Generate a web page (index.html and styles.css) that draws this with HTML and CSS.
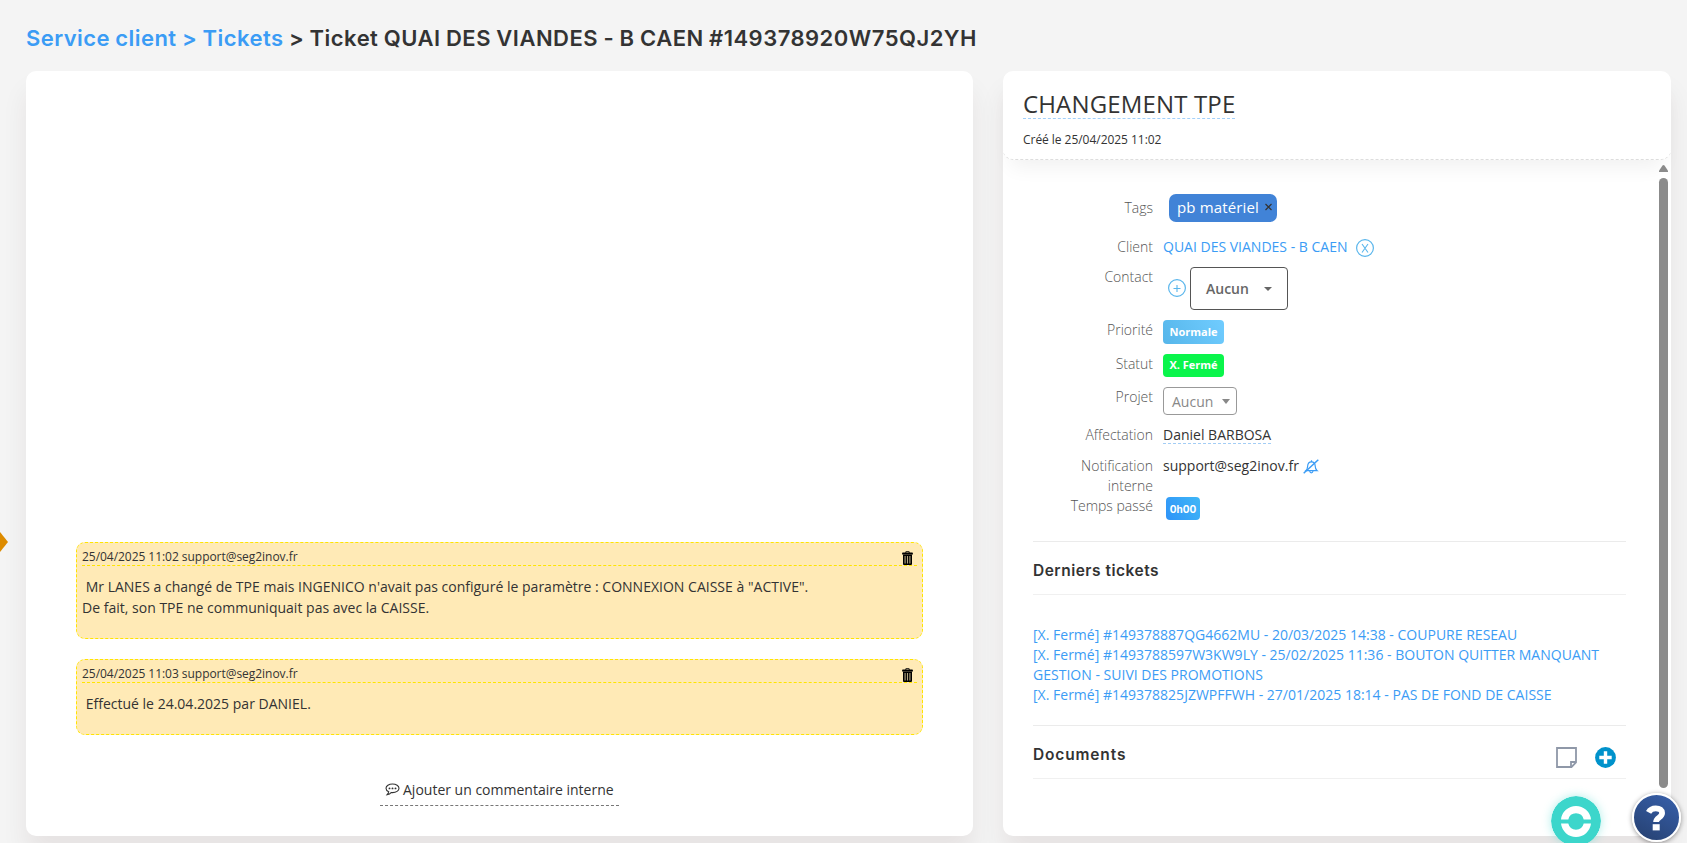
FILE: index.html
```html
<!DOCTYPE html>
<html lang="fr">
<head>
<meta charset="utf-8">
<title>Ticket</title>
<link rel="stylesheet" href="styles.css">
</head>
<body>
<svg width="0" height="0" class="defs">
  <symbol id="trash" viewBox="0 0 11 14">
    <path d="M3.4 1.6V.9c0-.4.3-.7.7-.7h2.8c.4 0 .7.3.7.7v.7h2.6c.4 0 .7.3.7.7v1.2H.1V2.3c0-.4.3-.7.7-.7zM4.3 1v.6h2.4V1z" fill="#000"/>
    <path d="M1 3.5h9V13c0 .5-.4.9-.9.9H1.9c-.5 0-.9-.4-.9-.9z" fill="#000"/>
    <path d="M3.1 5v7.6M5.5 5v7.6M7.9 5v7.6" stroke="#b3a57f" stroke-width="1.1"/>
  </symbol>
</svg>
<h1 class="crumbs"><a>Service client &gt; Tickets</a> &gt; Ticket QUAI DES VIANDES - B CAEN #149378920W75QJ2YH</h1>
<main class="columns">
  <section class="card thread">
    <article class="note">
      <header class="note-head"><span>25/04/2025 11:02 support@seg2inov.fr</span><svg class="trash"><use href="#trash"/></svg></header>
      <p class="note-body">&nbsp;Mr LANES a changé de TPE mais INGENICO n'avait pas configuré le paramètre : CONNEXION CAISSE à "ACTIVE".<br>De fait, son TPE ne communiquait pas avec la CAISSE.</p>
    </article>
    <article class="note">
      <header class="note-head"><span>25/04/2025 11:03 support@seg2inov.fr</span><svg class="trash"><use href="#trash"/></svg></header>
      <p class="note-body">&nbsp;Effectué le 24.04.2025 par DANIEL.</p>
    </article>
    <a class="add-comment">
      <svg width="15" height="13" viewBox="0 0 15 13"><path d="M7.5 1C3.9 1 1 2.9 1 5.3c0 1.5 1.1 2.8 2.7 3.5-.2 1.200-.8 2-1.600 2.900C4 11.500 5.400 10.700 6.200 9.500c.4.100.9.100 1.300.100 3.600 0 6.500-1.900 6.500-4.300S11.100 1 7.500 1z" fill="none" stroke="#333" stroke-width="1.100"/><circle cx="4.500" cy="5.400" r=".95" fill="#333"/><circle cx="7.500" cy="5.400" r=".95" fill="#333"/><circle cx="10.500" cy="5.400" r=".95" fill="#333"/></svg>
      <span>Ajouter un commentaire interne</span>
    </a>
  </section>

  <section class="card detail">
    <header class="detail-head">
      <div><span class="subject">CHANGEMENT TPE</span></div>
      <div class="created">Créé le 25/04/2025 11:02</div>
    </header>
    <div class="detail-scroll">
      <div class="detail-body">
        <dl class="fields">
          <dt class="tags-label">Tags</dt><dd><span class="tag">pb matériel<svg width="7" height="8" viewBox="0 0 7 8"><path d="M.5 1l6 6M6.500 1l-6 6" stroke="#333" stroke-width="1.200"/></svg></span></dd>
          <dt>Client</dt><dd class="client"><a>QUAI DES VIANDES - B CAEN</a><svg width="18" height="18" viewBox="0 0 18 18" fill="none" stroke="#5ab6ec"><circle cx="9" cy="9" r="8.400" stroke-width="1.200"/><path d="M6 5l6 8.500M12 5l-6 8.500" stroke-width="1.100"/></svg></dd>
          <dt>Contact</dt><dd class="contact"><svg width="18" height="18" viewBox="0 0 18 18" fill="none" stroke="#5ab6ec"><circle cx="9" cy="9" r="8.400" stroke-width="1.200"/><path d="M5.500 9.500h7M9 6v7" stroke-width="1.100"/></svg><span class="select big">Aucun<i class="caret"></i></span></dd>
          <dt>Priorité</dt><dd><span class="badge normal">Normale</span></dd>
          <dt>Statut</dt><dd><span class="badge closed">X. Fermé</span></dd>
          <dt>Projet</dt><dd><span class="select small">Aucun<i class="caret"></i></span></dd>
          <dt>Affectation</dt><dd><span class="assignee">Daniel BARBOSA</span></dd>
          <dt>Notification interne</dt><dd class="notify"><span>support@seg2inov.fr</span><svg width="16" height="15" viewBox="0 0 16 15" fill="none" stroke="#3b9cf5" stroke-width="1.200"><path d="M2.800 11.700c1.200-1 1.700-2.300 1.800-4.200.1-2.700 1.500-4.600 3.900-4.600 2.300 0 3.600 1.700 3.700 4.200 0 2 .5 3.500 1.900 4.600z"/><path d="M8.500 2.900V1.300M6.700 12c.2 1.300.8 1.800 1.600 1.800s1.500-.5 1.700-1.800"/><path d="M.7 14.200L15.300.8" stroke-width="1.500"/></svg></dd>
          <dt>Temps passé</dt><dd><span class="badge time">0h00</span></dd>
        </dl>
        <h2 class="block-title"><span class="t1">Derniers tickets</span></h2>
        <div class="links">
          <a>[X. Fermé] #149378887QG4662MU - 20/03/2025 14:38 - COUPURE RESEAU</a>
          <a>[X. Fermé] #1493788597W3KW9LY - 25/02/2025 11:36 - BOUTON QUITTER MANQUANT GESTION - SUIVI DES PROMOTIONS</a>
          <a>[X. Fermé] #149378825JZWPFFWH - 27/01/2025 18:14 - PAS DE FOND DE CAISSE</a>
        </div>
        <h2 class="block-title"><span class="t2">Documents</span>
          <span class="doc-tools">
            <svg width="21" height="21" viewBox="0 0 21 21" fill="none" stroke="#8f98a8" stroke-width="1.800"><path d="M1 1h19v14.500L15.500 20H1z"/><path d="M15 20v-5h5"/></svg>
            <svg width="21" height="21" viewBox="0 0 21 21"><circle cx="10.500" cy="10.500" r="10.400" fill="#0092cb"/><path d="M10.500 4.300v12.400M4.300 10.500h12.400" stroke="#fff" stroke-width="3.400"/></svg>
          </span>
        </h2>
      </div>
      <div class="scrollbar"><svg width="9" height="7" viewBox="0 0 9 7"><path d="M3.500.6Q4.500-.4 5.500.6L9 5.800V7H0V5.800z" fill="#8b8b8b"/></svg><div class="thumb"></div></div>
    </div>
  </section>
</main>
<div class="side-tab"></div>
<svg class="chat" width="50" height="50" viewBox="0 0 50 50"><circle cx="25" cy="25" r="25" fill="#3cd6cb"/><path d="M10 23.400a15.100 15.100 0 0 1 30 0h-7.300a7.900 7.900 0 0 0-15.400 0zM10 27.600a15.100 15.100 0 0 0 30 0h-7.300a7.900 7.900 0 0 1-15.400 0z" fill="#fff"/></svg>
<div class="help"><svg width="20" height="26" viewBox="0 0 20 26"><path d="M2.600 7.300C4 4.700 6.300 3.300 9.800 3.300c4 0 6.300 1.800 6.300 4.800 0 4.500-6 4.300-6 9" fill="none" stroke="#fff" stroke-width="5.800"/><path d="M6.700 19.200h7v6.200h-7z" fill="#fff"/></svg></div>
</body>
</html>
```
FILE: styles.css
```css
* { box-sizing: border-box; }
body {
  margin: 0;
  height: 843px;
  overflow: hidden;
  position: relative;
  background: #f4f4f4;
  color: #333;
  font: 14px/20px "Open Sans", "Noto Sans", sans-serif;
}
.defs { position: absolute; }
a { color: #3b9cf5; }
svg { flex: none; display: block; }
.crumbs {
  margin: 0;
  height: 71px;
  padding: 22px 0 0 26px;
  font: 600 22px/32px Inter, sans-serif;
  letter-spacing: 0.480px;
  word-spacing: -0.600px;
  white-space: nowrap;
}
.crumbs a { letter-spacing: 0.440px; }
.columns {
  display: grid;
  grid-template-columns: 947px 668px;
  column-gap: 30px;
  height: 765px;
  padding-left: 26px;
}
.card {
  height: 765px;
  background: #fff;
  border-radius: 10px;
  box-shadow: 0 20px 27px rgba(60, 20, 10, 0.070);
}

.thread {
  display: flex;
  flex-direction: column;
  justify-content: flex-end;
  padding: 0 50px 30px;
}
.note {
  padding: 9px 5px 0;
  margin-bottom: 20px;
  height: 97px;
  background: #ffeab6;
  border: 1px dashed #ffe500;
  border-radius: 9px;
}
.note + .note { height: 76px; margin-bottom: 43px; }
.note-head {
  display: flex;
  justify-content: space-between;
  height: 14px;
  padding-right: 4.500px;
  border-bottom: 1px dashed #ffe500;
  font-size: 12px;
  line-height: 9px;
  letter-spacing: -0.040px;
}
.trash { width: 11px; height: 14px; margin-top: -1.500px; }
.note-body { margin: 10px 0 0; line-height: 21px; letter-spacing: 0.010px; }
.add-comment {
  display: flex;
  align-items: center;
  align-self: center;
  gap: 3px;
  width: 239px;
  height: 28px;
  padding: 0 0 4px 5px;
  border-bottom: 1px dashed #777;
  color: #333;
  white-space: nowrap;
}

.detail { display: flex; flex-direction: column; }
.detail-head {
  height: 89px;
  padding: 17px 20px 0;
  border-bottom: 1px dashed #ddd;
  border-radius: 10px;
  box-shadow: 0 15px 20px -8px rgba(0, 0, 0, 0.060);
}
.subject {
  display: inline-block;
  height: 31px;
  font-size: 24px;
  line-height: 31px;
  letter-spacing: 0.150px;
  border-bottom: 1px dashed #a3d0fa;
}
.created { font-size: 12px; line-height: 18px; margin-top: 12px; letter-spacing: -0.040px; }
.detail-head > div:first-child { height: 31px; }
.detail-scroll { display: flex; flex: 1; min-height: 0; }
.detail-body { width: 593px; margin-left: 30px; }
.fields {
  display: grid;
  grid-template-columns: 120px 1fr;
  grid-template-rows: 40px 30px 53px 34px 33px 38px 31px 40px 45px;
  column-gap: 10px;
  margin: 0;
  padding-top: 37px;
  border-bottom: 1px solid #ebebeb;
}
dt { padding-left: 28px; font-weight: 300; text-align: right; color: #555; }
.tags-label { padding-top: 1px; }
dd { margin: 0; display: flex; align-items: flex-start; }
.tag {
  display: flex;
  align-items: center;
  gap: 6px;
  width: 108px;
  height: 28px;
  margin: -3px 0 0 6px;
  padding: 0 0 2px 8px;
  border-radius: 7px;
  background: #4183d7;
  color: #fff;
  font-size: 15px;
  font-weight: 500;
  letter-spacing: 0.150px;
  white-space: nowrap;
}
.client { gap: 9px; white-space: nowrap; }
.client svg { margin-top: 2px; }
.contact { gap: 4px; padding-left: 5px; }
.contact > svg { margin-top: 12px; }
.select { display: flex; align-items: center; justify-content: space-between; border-radius: 4px; }
.big {
  width: 98px;
  height: 43px;
  padding: 0 15px;
  border: 1px solid #555;
  color: #666;
  font-weight: 600;
}
.small { width: 74px; height: 28px; padding: 1px 6px 0 8px; border: 1px solid #999; color: #888; }
.caret { border: 4px solid transparent; border-top-color: currentColor; border-bottom: 0; }
.small .caret { border-top-width: 5px; margin-top: -1px; }
.badge {
  display: flex;
  align-items: center;
  justify-content: center;
  height: 24px;
  width: 61px;
  border-radius: 4px;
  color: #fff;
  font-size: 11px;
  font-weight: 700;
}
.normal { background: linear-gradient(60deg, #56b6ea, #70ccff); }
.closed { height: 23px; padding-bottom: 2px; background: #0af54b; }
.time {
  width: 34px;
  height: 23px;
  margin: 1px 0 0 3px;
  padding-top: 1px;
  background: linear-gradient(60deg, #2f93f8, #3fb7f7);
  font: 700 10px Inter, sans-serif;
}
.assignee { height: 19px; border-bottom: 1px dashed #a3cdf5; }
.notify { gap: 4px; }
.notify svg { margin-top: 3px; }
.block-title {
  display: flex;
  justify-content: space-between;
  align-items: center;
  height: 53px;
  margin: 0;
  border-bottom: 1px solid #f0f0f0;
  font: 600 15.500px/20px Inter, sans-serif;
}
.block-title > span:first-child { margin-top: 5px; }
.t1 { letter-spacing: 0.500px; }
.t2 { letter-spacing: 0.850px; }
.links {
  display: flex;
  flex-direction: column;
  height: 131px;
  padding-top: 30px;
  border-bottom: 1px solid #ebebeb;
  letter-spacing: 0.010px;
}
.links a { margin-right: -5px; }
.doc-tools { display: flex; gap: 18px; padding: 11px 10px 0 0; }
.scrollbar { margin: 5px 0 0 33px; }
.thumb { width: 9px; height: 610px; margin-top: 6px; border-radius: 5px; background: #8b8b8b; }

.side-tab {
  position: absolute;
  left: -8px;
  top: 532px;
  width: 16px;
  height: 20px;
  background: #dd8b00;
  clip-path: polygon(50% 0, 100% 50%, 50% 100%, 0 50%);
}
.chat {
  position: absolute;
  left: 1551px;
  top: 796px;
  border-radius: 50%;
  box-shadow: 0 0 10px rgba(60, 214, 203, 0.400);
}
.help {
  position: absolute;
  left: 1631.500px;
  top: 793px;
  width: 49px;
  height: 49px;
  display: flex;
  align-items: center;
  justify-content: center;
  border: 2px solid #fff;
  border-radius: 50%;
  background: linear-gradient(30deg, #26406f, #3760ac);
  box-shadow: 0 1px 5px rgba(0, 0, 0, 0.400);
}
```
